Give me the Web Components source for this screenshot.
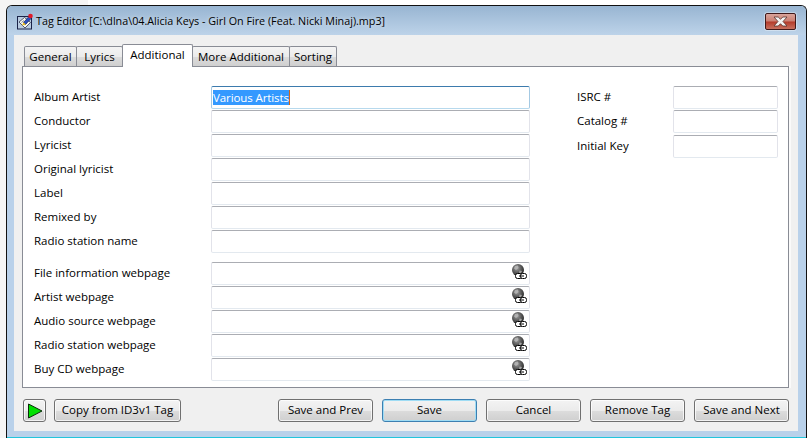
<!DOCTYPE html>
<html>
<head>
<meta charset="utf-8">
<title>Tag Editor</title>
<style>
    html, body { margin: 0; height: 100%; }
    body {
        background: linear-gradient(90deg, #f5f5f5 88px, #fff 88px);
        font: 11.5px "Open Sans", "Noto Sans", sans-serif;
        color: #000;
        overflow: hidden;
    }
</style>
</head>
<body>

<tag-window title="Tag Editor [C:\dlna\04.Alicia Keys - Girl On Fire (Feat. Nicki Minaj).mp3]">
    <tag-tabs>
        <tag-tab style="width:53px">General</tag-tab>
        <tag-tab style="width:47px">Lyrics</tag-tab>
        <tag-tab style="width:71px" active>Additional</tag-tab>
        <tag-tab style="width:98px">More Additional</tag-tab>
        <tag-tab style="width:48px">Sorting</tag-tab>
    </tag-tabs>
    <tag-panel>
        <div slot="left">
            <tag-field label="Album Artist" value="Various Artists" focused></tag-field>
            <tag-field label="Conductor"></tag-field>
            <tag-field label="Lyricist"></tag-field>
            <tag-field label="Original lyricist"></tag-field>
            <tag-field label="Label"></tag-field>
            <tag-field label="Remixed by"></tag-field>
            <tag-field label="Radio station name"></tag-field>
        </div>
        <div slot="left">
            <tag-field label="File information webpage" link></tag-field>
            <tag-field label="Artist webpage" link></tag-field>
            <tag-field label="Audio source webpage" link></tag-field>
            <tag-field label="Radio station webpage" link></tag-field>
            <tag-field label="Buy CD webpage" link></tag-field>
        </div>
        <tag-field slot="right" small label="ISRC #"></tag-field>
        <tag-field slot="right" small label="Catalog #"></tag-field>
        <tag-field slot="right" small label="Initial Key" style="margin-top:1px"></tag-field>
    </tag-panel>
    <tag-footer>
        <tag-button slot="left" icon style="width:23px"></tag-button>
        <tag-button slot="left" style="width:127px">Copy from ID3v1 Tag</tag-button>
        <tag-button slot="right">Save and Prev</tag-button>
        <tag-button slot="right" primary>Save</tag-button>
        <tag-button slot="right">Cancel</tag-button>
        <tag-button slot="right">Remove Tag</tag-button>
        <tag-button slot="right">Save and Next</tag-button>
    </tag-footer>
</tag-window>

<script>
class TagWindow extends HTMLElement {
    constructor() {
        super();
        this.attachShadow({ mode: 'open' });
        this.shadowRoot.innerHTML = `
<style>
    :host {
        display: flex;
        flex-direction: column;
        box-sizing: border-box;
        width: 801px;
        height: 433px;
        margin: 5px 0 0 6px;
        border: 1px solid #111;
        border-bottom: none;
        border-radius: 6px 6px 0 0;
        background: #b9d1ea;
        overflow: hidden;
    }
    #bar {
        flex: none;
        display: flex;
        align-items: center;
        height: 29px;
        padding: 0 10px 0 10px;
        background: linear-gradient(#98b5d2, #bdd3e9);
    }
    #icon { flex: none; margin: 1px 3px 0 0; }
    #title { flex: 1; margin-top: 1px; font-size: 10.75px; white-space: nowrap; text-shadow: 0 0 4px rgba(255,255,255,.6); }
    #close {
        flex: none;
        display: flex;
        align-items: center;
        justify-content: center;
        box-sizing: border-box;
        width: 31px;
        height: 17px;
        margin-top: 1px;
        border: 1px solid #40191a;
        border-radius: 2px;
        background: linear-gradient(#d9a49b, #cb7f72 48%, #b33a2a 52%, #c8705f);
        box-shadow: 0 0 0 1px rgba(255,255,255,.35);
    }
    #body {
        flex: 1;
        display: flex;
        flex-direction: column;
        margin: 0 8px 0 7px;
        background: #f0f0f0;
    }
    #edge { flex: none; height: 6px; }
    #line { flex: none; height: 1px; background: #23c5dc; }
</style>
<div id="bar">
    <svg id="icon" width="16" height="17" viewBox="0 0 16 17">
        <rect x=".5" y="3.5" width="14" height="12.5" fill="#b9cbe0" stroke="#1a2348"/>
        <path d="M2 9 7.5 4.5 13.5 9.5 8 15Z" fill="#fbfaf0" stroke="#30364f" stroke-width=".8"/>
        <path d="M4.5 9.5 7 7.5M7 12 10 9.5" stroke="#80859a"/>
        <path d="M6.5 9.5 12 3.5 14 5.5 8.5 11.5Z" fill="#2b4fc0" stroke="#10205c" stroke-width=".7"/>
        <path d="M6.5 9.2 5 12.6 8.8 11.6Z" fill="#f0c020"/>
        <circle cx="13.5" cy="3" r="2.3" fill="#e01b2a"/>
    </svg>
    <div id="title"></div>
    <div id="close">
        <svg width="17" height="11" viewBox="0 0 17 11">
            <path d="M2 1H6.2L8.5 3.3 10.8 1H15L11 5.5 15 10H10.8L8.5 7.7 6.2 10H2L6 5.5Z" fill="#f3f3f3" stroke="#59342f" stroke-width=".8"/>
        </svg>
    </div>
</div>
<div id="body"><slot></slot></div>
<div id="edge"></div>
<div id="line"></div>`;
    }

    connectedCallback() {
        this.shadowRoot.getElementById('title').textContent = this.getAttribute('title');
    }
}

class TagTabs extends HTMLElement {
    constructor() {
        super();
        this.attachShadow({ mode: 'open' });
        this.shadowRoot.innerHTML = `
<style>
    :host {
        display: flex;
        align-items: flex-end;
        height: 22px;
        margin: 9px 0 0 0;
        padding-left: 10px;
        position: relative;
        z-index: 1;
    }
</style>
<slot></slot>`;
    }
}

class TagTab extends HTMLElement {
    constructor() {
        super();
        this.attachShadow({ mode: 'open' });
        this.shadowRoot.innerHTML = `
<style>
    :host {
        display: block;
        flex: none;
        box-sizing: border-box;
        height: 20px;
        margin-left: -1px;
        padding-top: 2px;
        border: 1px solid #898c95;
        border-bottom: none;
        border-radius: 2px 2px 0 0;
        background: linear-gradient(#f4f4f4, #ebebeb 50%, #dddddd 50%, #cfcfcf);
        text-align: center;
        white-space: nowrap;
    }
    :host(:first-child) { margin-left: 0; }
    :host([active]) {
        height: 23px;
        margin-bottom: -1px;
        padding-top: 2px;
        background: #fff;
        position: relative;
        z-index: 1;
    }
</style>
<slot></slot>`;
    }
}

class TagPanel extends HTMLElement {
    constructor() {
        super();
        this.attachShadow({ mode: 'open' });
        this.shadowRoot.innerHTML = `
<style>
    :host {
        display: flex;
        box-sizing: border-box;
        height: 322px;
        margin: 0 9px 0 8px;
        padding: 18px 9px 0 11px;
        border: 1px solid #898c95;
        background: #fff;
        box-shadow: 2px 0 0 #fafafa;
    }
    #left { display: flex; flex-direction: column; gap: 8px; width: 496px; }
    #right { display: flex; flex-direction: column; margin-left: 47px; }
</style>
<div id="left"><slot name="left"></slot></div>
<div id="right"><slot name="right"></slot></div>`;
    }
}

const fieldTemplate = document.createElement('template');
fieldTemplate.innerHTML = `
<style>
    :host {
        display: flex;
        align-items: flex-start;
        height: 24px;
    }
    #label { flex: none; width: 177px; line-height: 23px; white-space: nowrap; }
    :host([small]) #label { width: 96px; }
    #box {
        flex: none;
        display: flex;
        align-items: center;
        justify-content: flex-end;
        box-sizing: border-box;
        width: 319px;
        height: 23px;
        margin-top: 1px;
        padding: 0 1px;
        border: 1px solid #e2e3ea;
        border-top-color: #abadb3;
        border-bottom-color: #e3e9ef;
        border-radius: 2px;
        background: #fff;
    }
    :host([small]) #box { width: 105px; }
    :host([focused]) #box {
        border-color: #a4c9e3;
        border-top-color: #3d7bad;
        border-bottom-color: #b7d9ed;
    }
    #value {
        margin-right: auto;
        line-height: 15px;
        letter-spacing: -.1px;
        background: #3399ff;
        color: #fff;
        border-right: 1px solid #d0661c;
    }
    #value:empty { display: none; }
    #link { flex: none; display: none; margin-top: -3px; }
    :host([link]) #link { display: block; }
</style>
<div id="label"></div>
<div id="box">
    <span id="value"></span>
    <svg id="link" width="17" height="18" viewBox="0 0 17 18">
        <defs>
            <radialGradient id="globe" cx=".4" cy=".35" r=".7">
                <stop offset="0" stop-color="#a0a0a0"/>
                <stop offset=".55" stop-color="#585858"/>
                <stop offset="1" stop-color="#222"/>
            </radialGradient>
        </defs>
        <circle cx="7" cy="7" r="6" fill="url(#globe)"/>
        <path d="M4 3 7 2.5 7.5 5 5 7 3 5.5ZM8.5 7.5 11 8 10 10 8 10.5Z" fill="#bdbdbd" opacity=".75"/>
        <rect x="4.5" y="10.5" width="7" height="5" rx="2" fill="#fff" stroke="#000"/>
        <rect x="9.5" y="10.5" width="6" height="5" rx="2" fill="#fff" stroke="#000"/>
        <path d="M8 13H13" stroke="#000"/>
    </svg>
</div>`;

class TagField extends HTMLElement {
    constructor() {
        super();
        this.attachShadow({ mode: 'open' });
        this.shadowRoot.appendChild(fieldTemplate.content.cloneNode(true));
    }

    connectedCallback() {
        this.shadowRoot.getElementById('label').textContent = this.getAttribute('label');
        this.shadowRoot.getElementById('value').textContent = this.getAttribute('value') || '';
    }
}

class TagFooter extends HTMLElement {
    constructor() {
        super();
        this.attachShadow({ mode: 'open' });
        this.shadowRoot.innerHTML = `
<style>
    :host {
        display: flex;
        justify-content: space-between;
        margin: 11px 9px 0 9px;
    }
    div { display: flex; }
    #left { gap: 8px; }
    #right { gap: 9px; }
</style>
<div id="left"><slot name="left"></slot></div>
<div id="right"><slot name="right"></slot></div>`;
    }
}

class TagButton extends HTMLElement {
    constructor() {
        super();
        this.attachShadow({ mode: 'open' });
        this.shadowRoot.innerHTML = `
<style>
    :host {
        display: flex;
        align-items: center;
        justify-content: center;
        box-sizing: border-box;
        width: 95px;
        height: 23px;
        padding-bottom: 2px;
        border: 1px solid #707070;
        border-radius: 3px;
        background: linear-gradient(#f3f3f3, #ebebeb 50%, #dddddd 50%, #cfcfcf);
        box-shadow: inset 0 0 0 1px rgba(255,255,255,.75);
        white-space: nowrap;
    }
    :host([icon]) { padding-bottom: 0; }
    :host([primary]) {
        border-color: #3c7fb1;
        background: linear-gradient(#f2f2f2, #ebebeb 50%, #dcdcdc 50%, #cfcfcf);
        box-shadow: inset 0 0 0 1px #9fdcf4;
    }
    svg { display: none; }
    :host([icon]) svg { display: block; }
</style>
<svg width="16" height="16" viewBox="0 0 16 16">
    <path d="M1.5 1 15 8 1.5 15Z" fill="#00e000" stroke="#0b2b0b"/>
</svg>
<slot></slot>`;
    }
}

window.customElements.define('tag-window', TagWindow);
window.customElements.define('tag-tabs', TagTabs);
window.customElements.define('tag-tab', TagTab);
window.customElements.define('tag-panel', TagPanel);
window.customElements.define('tag-field', TagField);
window.customElements.define('tag-footer', TagFooter);
window.customElements.define('tag-button', TagButton);
</script>
</body>
</html>
